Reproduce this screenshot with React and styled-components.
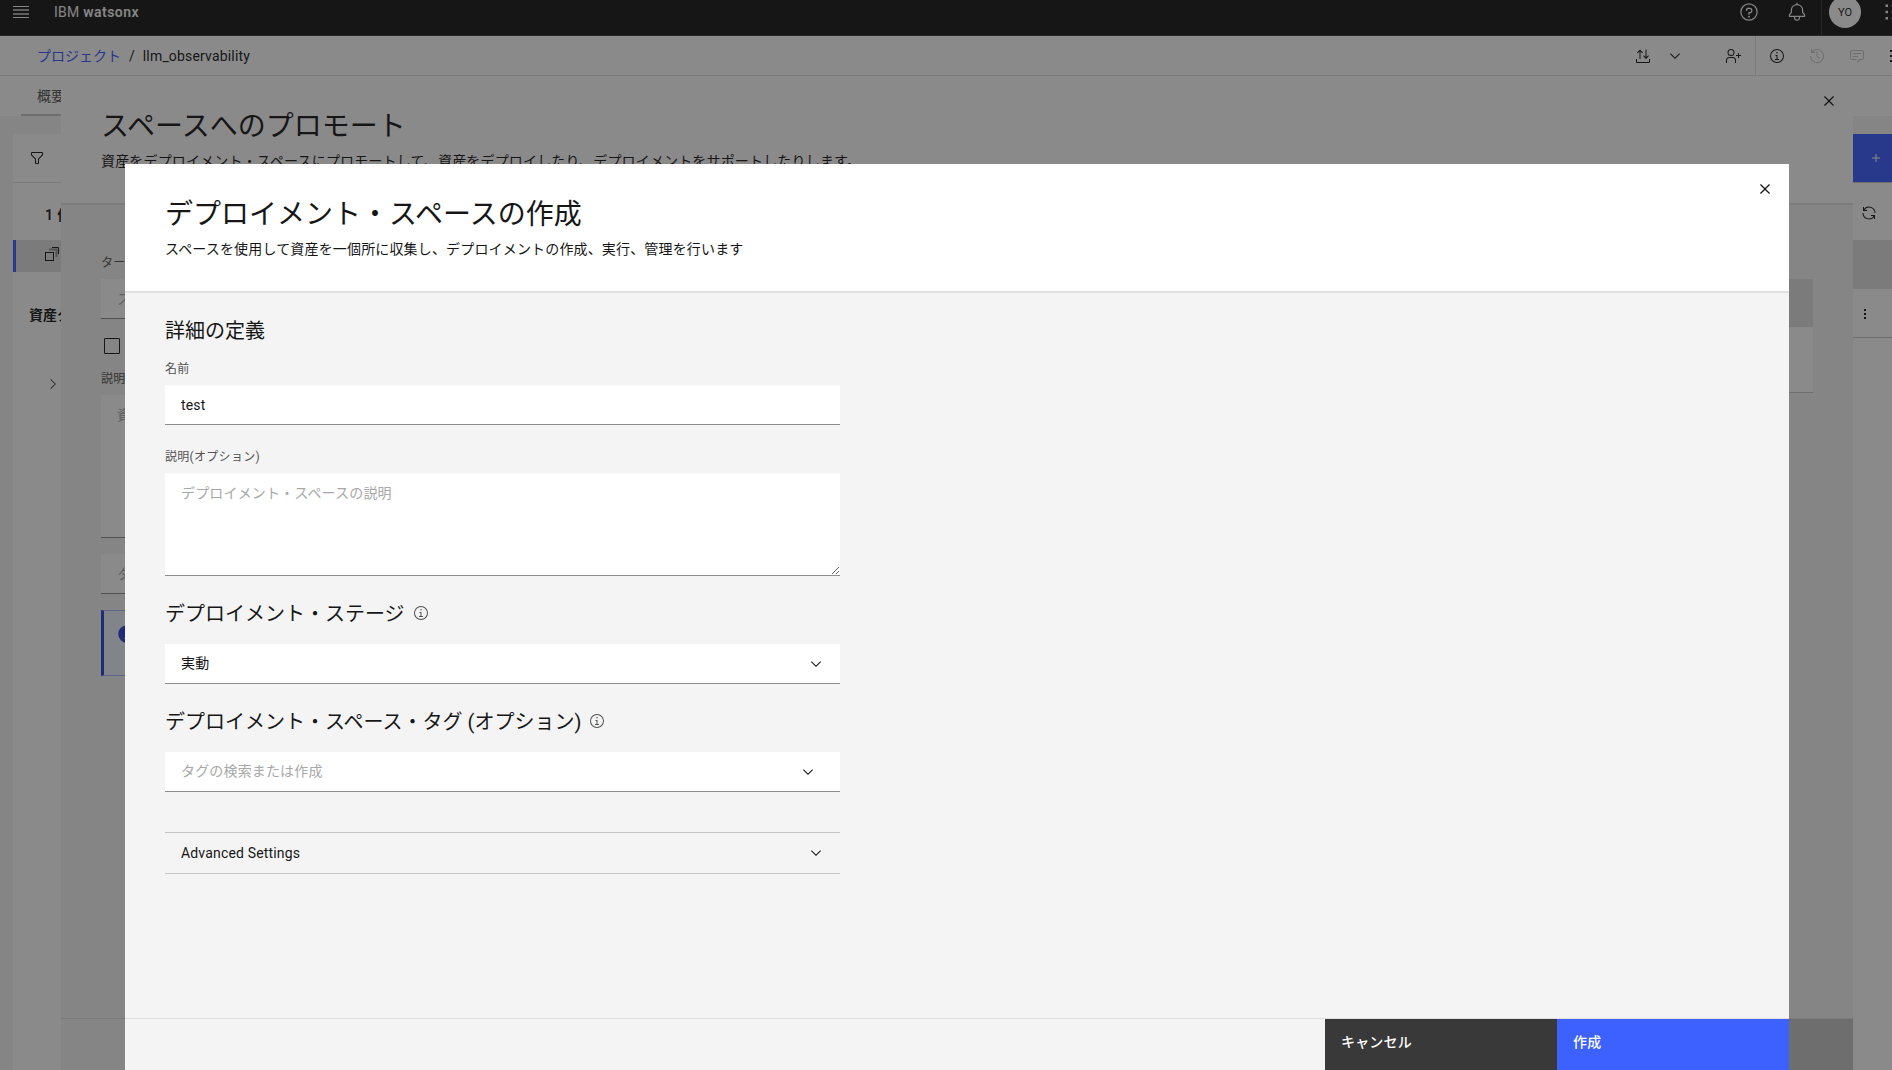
import * as React from "react";
import styled, { createGlobalStyle } from "styled-components";

const GlobalStyle = createGlobalStyle`
  * {
    box-sizing: border-box;
  }
  body {
    margin: 0;
    overflow: hidden;
    background: #858585;
    color: #161616;
    font-family: Roboto, "Noto Sans CJK JP", sans-serif;
    font-size: 14px;
  }
  h1, h2, p {
    margin: 0;
    font-weight: 400;
  }
  button, input, textarea {
    font: inherit;
    color: inherit;
    border: 0;
    border-radius: 0;
    outline: none;
  }
  svg {
    flex: none;
  }
`;

/* ---------- Page behind the dialogs ---------- */

const Page = styled.div`
  position: relative;
  width: 1892px;
  height: 1070px;
  overflow: hidden;
  background: #f4f4f4;
  display: flex;
  flex-direction: column;
`;

const TopBar = styled.header`
  flex: none;
  height: 36px;
  padding: 0 0 11px 13px;
  display: flex;
  align-items: center;
  background: #161616;
  color: #f4f4f4;
  border-bottom: 1px solid #393939;
`;

const Brand = styled.div`
  margin-left: 25px;
  flex: 1;
  white-space: nowrap;
  letter-spacing: 0.25px;
  b {
    font-weight: 600;
    letter-spacing: 0.45px;
  }
`;

const TopActions = styled.div`
  flex: none;
  width: 153px;
  height: 24px;
  display: flex;
  align-items: center;
`;

const TopDivider = styled.div`
  flex: none;
  width: 1px;
  height: 48px;
  margin: 0 7px 0 14px;
  background: #393939;
`;

const Avatar = styled.div`
  flex: none;
  width: 32px;
  height: 32px;
  margin-right: 22px;
  border-radius: 50%;
  background: #fff;
  color: #161616;
  display: flex;
  align-items: center;
  justify-content: center;
  font-size: 11px;
`;

const Crumbs = styled.nav`
  flex: none;
  height: 40px;
  padding-left: 37px;
  display: flex;
  align-items: center;
  background: #fff;
  border-bottom: 1px solid #e0e0e0;
  white-space: nowrap;
  a {
    color: #3b5bfe;
    padding-bottom: 2px;
  }
  i {
    font-style: normal;
    margin: 0 8px 0 8px;
  }
  b {
    flex: 1;
    font-weight: 400;
    letter-spacing: 0.17px;
  }
`;

const CrumbActions = styled.div`
  flex: none;
  width: 257px;
  height: 39px;
  display: flex;
  align-items: center;
`;

const CrumbDivider = styled.div`
  flex: none;
  width: 1px;
  height: 39px;
  margin: 0 13px 0 12px;
  background: #e0e0e0;
`;

const Tabs = styled.div`
  flex: none;
  height: 40px;
  padding-left: 21px;
  background: #fff;
`;

const Tab = styled.div`
  width: 120px;
  height: 40px;
  padding-left: 16px;
  line-height: 40px;
  color: #525252;
  border-bottom: 2px solid #c6c6c6;
`;

const Columns = styled.div`
  flex: 1;
  display: flex;
  justify-content: space-between;
  padding: 18px 0 0 13px;
`;

const SideNav = styled.aside`
  width: 280px;
  background: #fff;
`;

const FilterRow = styled.div`
  height: 49px;
  padding-left: 16px;
  display: flex;
  align-items: center;
  border-bottom: 1px solid #e0e0e0;
`;

const CountRow = styled.div`
  height: 57px;
  padding: 5px 0 0 32px;
  display: flex;
  align-items: center;
  font-weight: 600;
  letter-spacing: 0.4px;
`;

const SelectedRow = styled.div`
  height: 32px;
  padding: 0 0 4px 29px;
  display: flex;
  align-items: center;
  background: #e0e0e0;
  border-left: 3px solid #3b5bfe;
`;

const TypesTitle = styled.div`
  height: 88px;
  padding-left: 16px;
  line-height: 87px;
  font-weight: 700;
`;

const TypeRow = styled.div`
  height: 48px;
  padding-left: 32px;
  display: flex;
  align-items: center;
`;

const Assets = styled.section`
  width: 39px;
  background: #fff;
`;

const NewAsset = styled.div`
  height: 48px;
  padding-left: 15px;
  display: flex;
  align-items: center;
  background: #3b5bfe;
  color: #fff;
`;

const RefreshRow = styled.div`
  height: 58px;
  padding: 2px 0 0 8px;
  display: flex;
  align-items: center;
  border-top: 1px solid #c6c6c6;
`;

const AssetHead = styled.div`
  height: 49px;
  background: #e0e0e0;
`;

const AssetRow = styled.div`
  height: 49px;
  padding: 1px 0 0 4px;
  display: flex;
  align-items: center;
  border-bottom: 1px solid #c6c6c6;
`;

/* ---------- Sheets ---------- */

const PromoteSheet = styled.section`
  position: absolute;
  top: 76px;
  left: 61px;
  width: 1792px;
  bottom: 0;
  display: flex;
  flex-direction: column;
  background: #f4f4f4;
`;

const Overlay = styled.div`
  position: absolute;
  inset: 0;
  background: rgba(22, 22, 22, 0.5);
`;

const CreateSheet = styled.section`
  position: absolute;
  top: 164px;
  left: 125px;
  width: 1664px;
  bottom: 0;
  display: flex;
  flex-direction: column;
  background: #f4f4f4;
`;

const SheetHeader = styled.header`
  flex: none;
  height: 129px;
  padding: 33px 14px 0 40px;
  display: flex;
  justify-content: space-between;
  background: #fff;
  border-bottom: 2px solid #e0e0e0;
`;

const SheetTitle = styled.h1`
  font-size: 28px;
  line-height: 36px;
  white-space: nowrap;
`;

const SheetText = styled.p`
  margin-top: 6px;
  line-height: 20px;
  letter-spacing: 0.16px;
  white-space: nowrap;
`;

const CloseButton = styled.button`
  width: 20px;
  height: 20px;
  margin-top: -18px;
  padding: 0;
  background: none;
`;

const PromoteBody = styled.div`
  flex: 1;
  padding: 50px 40px 0;
  display: flex;
  justify-content: space-between;
`;

const PromoteForm = styled.div`
  width: 675px;
`;

const PromoteTable = styled.div`
  width: 900px;
  height: 114px;
  margin-top: 24px;
  background: linear-gradient(#e0e0e0 48px, #fff 48px);
  border-bottom: 1px solid #c6c6c6;
`;

const SheetFooter = styled.footer`
  flex: none;
  height: 52px;
  display: flex;
  justify-content: flex-end;
  border-top: 1px solid #e0e0e0;
`;

const FooterButton = styled.button`
  width: 232px;
  height: 51px;
  padding: 0 16px 7px;
  text-align: left;
  font-weight: 500;
  letter-spacing: 0.16px;
  color: #fff;
  background: ${(p) => p.$bg};
`;

/* ---------- Form parts ---------- */

const Form = styled.div`
  flex: 1;
  width: 715px;
  padding: 22px 0 0 40px;
`;

const SectionTitle = styled.h2`
  display: flex;
  align-items: center;
  gap: 8px;
  height: 28px;
  margin-top: ${(p) => p.$top || 0}px;
  font-size: 20px;
  white-space: nowrap;
  svg {
    margin-top: 2px;
    color: #525252;
  }
`;

const Label = styled.label`
  display: block;
  height: 16px;
  line-height: 16px;
  margin: ${(p) => p.$top || 0}px 0 ${(p) => p.$gap || 8}px;
  font-size: 12px;
  letter-spacing: 0.3px;
  color: #525252;
  white-space: nowrap;
`;

const TextInput = styled.input`
  display: block;
  width: 100%;
  height: 40px;
  margin-top: ${(p) => p.$top || 0}px;
  padding: 1px 16px 0;
  background: #fff;
  border-bottom: 1px solid #8d8d8d;
  letter-spacing: 0.16px;
  &::placeholder {
    color: #a8a8a8;
  }
`;

const TextArea = styled.textarea`
  display: block;
  width: 100%;
  height: ${(p) => p.$height}px;
  padding: 10px 16px;
  line-height: 20px;
  letter-spacing: 0.16px;
  background: #fff;
  border-bottom: 1px solid #8d8d8d;
  resize: vertical;
  &::placeholder {
    color: #a8a8a8;
  }
`;

const Dropdown = styled.div`
  height: 40px;
  margin-top: 18px;
  padding: 0 ${(p) => p.$end || 16}px 0 16px;
  display: flex;
  align-items: center;
  justify-content: space-between;
  background: #fff;
  color: ${(p) => (p.$empty ? "#a8a8a8" : "#161616")};
  letter-spacing: 0.16px;
  border-bottom: 1px solid #8d8d8d;
  span {
    padding-bottom: 3px;
  }
  svg {
    color: #161616;
  }
`;

const Accordion = styled.div`
  height: 42px;
  margin-top: 40px;
  padding: 0 16px 0 16px;
  display: flex;
  align-items: center;
  justify-content: space-between;
  letter-spacing: 0.17px;
  border-top: 1px solid #c6c6c6;
  border-bottom: 1px solid #c6c6c6;
  span {
    padding-bottom: 1px;
  }
`;

const Checkbox = styled.div`
  width: 16px;
  height: 16px;
  margin: 19px 0 17px 3px;
  border: 1px solid #161616;
  border-radius: 1px;
`;

const Notice = styled.div`
  height: 66px;
  margin-top: 16px;
  padding: 13px;
  background: #edf5ff;
  border: 1px solid #a6b4ff;
  border-left: 3px solid #2d3fd8;
  color: #2d3fd8;
`;

/* ---------- Icons ---------- */

const PATHS = {
  close:
    "M17.4141 16L24 9.4141 22.5859 8 16 14.5859 9.4143 8 8 9.4141 14.5859 16 8 22.5859 9.4143 24 16 17.4141 22.5859 24 24 22.5859 17.4141 16z",
  chevronDown: "M16 22L6 12 7.4 10.6 16 19.2 24.6 10.6 26 12z",
  chevronRight: "M22 16L12 26 10.6 24.6 19.2 16 10.6 7.4 12 6z",
  info: "M17 22V14H13V16H15V22H12V24H20V22ZM16 8a1.5 1.5 0 1 0 1.5 1.5A1.5 1.5 0 0 0 16 8ZM16 30A14 14 0 1 1 30 16 14 14 0 0 1 16 30ZM16 4A12 12 0 1 0 28 16 12 12 0 0 0 16 4Z",
  help: "M17 9H15.5A4.49 4.49 0 0 0 11 13.5V14h2v-.5A2.5 2.5 0 0 1 15.5 11H17a2.5 2.5 0 0 1 0 5H15v4.5h2V18a4.5 4.5 0 0 0 0-9ZM16 22a1.5 1.5 0 1 0 1.5 1.5A1.5 1.5 0 0 0 16 22ZM16 30A14 14 0 1 1 30 16 14 14 0 0 1 16 30ZM16 4A12 12 0 1 0 28 16 12 12 0 0 0 16 4Z",
  bell: "M28.7 19.3L26 16.6V13a10 10 0 0 0-9-9.95V1H15V3.05A10 10 0 0 0 6 13v3.6L3.3 19.3A1 1 0 0 0 3 20v3a1 1 0 0 0 1 1h7v.8a5.15 5.15 0 0 0 4.5 5.2A5 5 0 0 0 21 25V24h7a1 1 0 0 0 1-1V20A1 1 0 0 0 28.7 19.3ZM19 25a3 3 0 0 1-6 0V24h6Zm8-3H5V20.4L7.7 17.7A1 1 0 0 0 8 17V13a8 8 0 0 1 16 0v4a1 1 0 0 0 .3.7L27 20.4Z",
  filter:
    "M18 28H14a2 2 0 0 1-2-2V18.41L4.59 11A2 2 0 0 1 4 9.59V6A2 2 0 0 1 6 4H26a2 2 0 0 1 2 2V9.59A2 2 0 0 1 27.41 11L20 18.41V26A2 2 0 0 1 18 28ZM6 6V9.59l8 8V26h4V17.59l8-8V6Z",
  renew:
    "M12 10H6.78A11 11 0 0 1 27 16h2A13 13 0 0 0 6 7.68V4H4v8h8ZM20 22h5.22A11 11 0 0 1 5 16H3a13 13 0 0 0 23 8.32V28h2V20H20Z",
  history:
    "M20.59 22L15 16.41V7h2v8.58l5 5.01ZM16 2A13.94 13.94 0 0 0 6 6.23V2H4v8h8V8H7.08A12 12 0 1 1 4 16H2A14 14 0 1 0 16 2Z",
  chat: "M17.74 30L16 29l4-7h6a2 2 0 0 0 2-2V8a2 2 0 0 0-2-2H6A2 2 0 0 0 4 8V20a2 2 0 0 0 2 2h9v2H6a4 4 0 0 1-4-4V8A4 4 0 0 1 6 4H26a4 4 0 0 1 4 4V20a4 4 0 0 1-4 4H21.16ZM8 10H24V12H8ZM8 16H18V18H8Z",
  userAdd:
    "M32 14H28V10H26V14H22V16H26V20H28V16H32ZM12 4A5 5 0 1 1 7 9a5 5 0 0 1 5-5m0-2a7 7 0 1 0 7 7A7 7 0 0 0 12 2ZM22 30H20V25a5 5 0 0 0-5-5H9a5 5 0 0 0-5 5v5H2V25a7 7 0 0 1 7-7h6a7 7 0 0 1 7 7Z",
  add: "M17 15V8H15V15H8V17H15V24H17V17H24V15Z",
  more: "M14 6h4v4h-4zM14 14h4v4h-4zM14 22h4v4h-4z",
  switcher:
    "M14 4h4v4h-4zM4 4h4v4H4zM24 4h4v4h-4zM14 14h4v4h-4zM4 14h4v4H4zM24 14h4v4h-4zM14 24h4v4h-4zM4 24h4v4H4zM24 24h4v4h-4z",
  transfer:
    "M28 22v6H4v-6H2v6a2 2 0 0 0 2 2H28a2 2 0 0 0 2-2v-6ZM9 22V6.8L5.4 10.4 4 9 10 3l6 6-1.4 1.4L11 6.8V22ZM21 3V18.2L17.4 14.6 16 16l6 6 6-6-1.4-1.4L23 18.2V3Z",
  filled:
    "M16 2A14 14 0 1 0 30 16 14 14 0 0 0 16 2Zm0 6a1.5 1.5 0 1 1-1.5 1.5A1.5 1.5 0 0 1 16 8Zm4 16.1H12V21.9h2.9V15.1H13V12.9h4.1v9H20Z",
};

function Icon({ name, size = 16, color = "currentColor" }) {
  return (
    <svg width={size} height={size} viewBox="0 0 32 32" fill={color}>
      <path d={PATHS[name]} />
    </svg>
  );
}

function MenuIcon() {
  return (
    <svg width="16" height="12" viewBox="0 0 16 12" fill="#f4f4f4">
      <path d="M0 0h16v1H0zM0 11h16v1H0z" />
      <path d="M0 3h16v2H0zM0 7h16v2H0z" opacity="0.65" />
    </svg>
  );
}

function StackIcon() {
  return (
    <svg width="16" height="16" viewBox="0 0 16 16" fill="none" stroke="#161616">
      <rect x="0.5" y="6.5" width="8" height="8" />
      <path d="M4 3.5h7.5V11" stroke="#8d8d8d" strokeWidth="2" />
      <path d="M7 1.5h6.5V8" />
    </svg>
  );
}

const Gap = styled.span`
  flex: none;
  width: ${(p) => p.$w}px;
`;

function Header() {
  return (
    <>
      <TopBar>
        <MenuIcon />
        <Brand>
          IBM <b>watsonx</b>
        </Brand>
        <TopActions>
          <Icon name="help" size={20} />
          <Gap $w={28} />
          <Icon name="bell" size={20} />
          <TopDivider />
          <Avatar>YO</Avatar>
          <Icon name="switcher" size={20} />
        </TopActions>
      </TopBar>
      <Crumbs>
        <a>プロジェクト</a>
        <i>/</i>
        <b>llm_observability</b>
        <CrumbActions>
          <Icon name="transfer" />
          <Gap $w={16} />
          <Icon name="chevronDown" />
          <Gap $w={42} />
          <Icon name="userAdd" />
          <Gap $w={2} />
          <CrumbDivider />
          <Icon name="info" />
          <Gap $w={24} />
          <Icon name="history" color="#c6c6c6" />
          <Gap $w={24} />
          <Icon name="chat" color="#c6c6c6" />
          <Gap $w={23} />
          <Icon name="switcher" />
        </CrumbActions>
      </Crumbs>
    </>
  );
}

function ProjectPage() {
  return (
    <>
      <Header />
      <Tabs>
        <Tab>概要</Tab>
      </Tabs>
      <Columns>
        <SideNav>
          <FilterRow>
            <Icon name="filter" />
          </FilterRow>
          <CountRow>1 件</CountRow>
          <SelectedRow>
            <StackIcon />
          </SelectedRow>
          <TypesTitle>資産タ</TypesTitle>
          <TypeRow>
            <Icon name="chevronRight" color="#525252" />
          </TypeRow>
        </SideNav>
        <Assets>
          <NewAsset>
            <Icon name="add" />
          </NewAsset>
          <RefreshRow>
            <Icon name="renew" />
          </RefreshRow>
          <AssetHead />
          <AssetRow>
            <Icon name="more" />
          </AssetRow>
        </Assets>
      </Columns>
    </>
  );
}

function PromoteDialog() {
  return (
    <PromoteSheet>
      <SheetHeader>
        <div>
          <SheetTitle>スペースへのプロモート</SheetTitle>
          <SheetText>
            資産をデプロイメント・スペースにプロモートして、資産をデプロイしたり、デプロイメントをサポートしたりします。
          </SheetText>
        </div>
        <CloseButton>
          <Icon name="close" size={20} />
        </CloseButton>
      </SheetHeader>
      <PromoteBody>
        <PromoteForm>
          <Label>ター</Label>
          <TextInput placeholder="ス" />
          <Checkbox />
          <Label>説明</Label>
          <TextArea $height={143} placeholder="資" />
          <TextInput $top={16} placeholder="タ" />
          <Notice>
            <Icon name="filled" size={20} />
          </Notice>
        </PromoteForm>
        <PromoteTable />
      </PromoteBody>
      <SheetFooter>
        <FooterButton $bg="#c6c6c6" />
      </SheetFooter>
    </PromoteSheet>
  );
}

function CreateSpaceDialog() {
  const [name, setName] = React.useState("test");
  const [description, setDescription] = React.useState("");

  return (
    <CreateSheet>
      <SheetHeader>
        <div>
          <SheetTitle>デプロイメント・スペースの作成</SheetTitle>
          <SheetText>
            スペースを使用して資産を一個所に収集し、デプロイメントの作成、実行、管理を行います
          </SheetText>
        </div>
        <CloseButton>
          <Icon name="close" size={20} />
        </CloseButton>
      </SheetHeader>
      <Form>
        <SectionTitle>詳細の定義</SectionTitle>
        <Label $top={18}>名前</Label>
        <TextInput value={name} onChange={(e) => setName(e.target.value)} />
        <Label $top={24}>説明(オプション)</Label>
        <TextArea
          $height={103}
          placeholder="デプロイメント・スペースの説明"
          value={description}
          onChange={(e) => setDescription(e.target.value)}
        />
        <SectionTitle $top={22}>
          デプロイメント・ステージ
          <Icon name="info" />
        </SectionTitle>
        <Dropdown>
          <span>実動</span>
          <Icon name="chevronDown" />
        </Dropdown>
        <SectionTitle $top={22}>
          デプロイメント・スペース・タグ (オプション)
          <Icon name="info" />
        </SectionTitle>
        <Dropdown $empty $end={24}>
          <span>タグの検索または作成</span>
          <Icon name="chevronDown" />
        </Dropdown>
        <Accordion>
          <span>Advanced Settings</span>
          <Icon name="chevronDown" />
        </Accordion>
      </Form>
      <SheetFooter>
        <FooterButton $bg="#393939">キャンセル</FooterButton>
        <FooterButton $bg="#3d61ff">作成</FooterButton>
      </SheetFooter>
    </CreateSheet>
  );
}

export default function App() {
  return (
    <>
      <GlobalStyle />
      <Page>
        <ProjectPage />
        <PromoteDialog />
        <Overlay />
        <CreateSpaceDialog />
      </Page>
    </>
  );
}
